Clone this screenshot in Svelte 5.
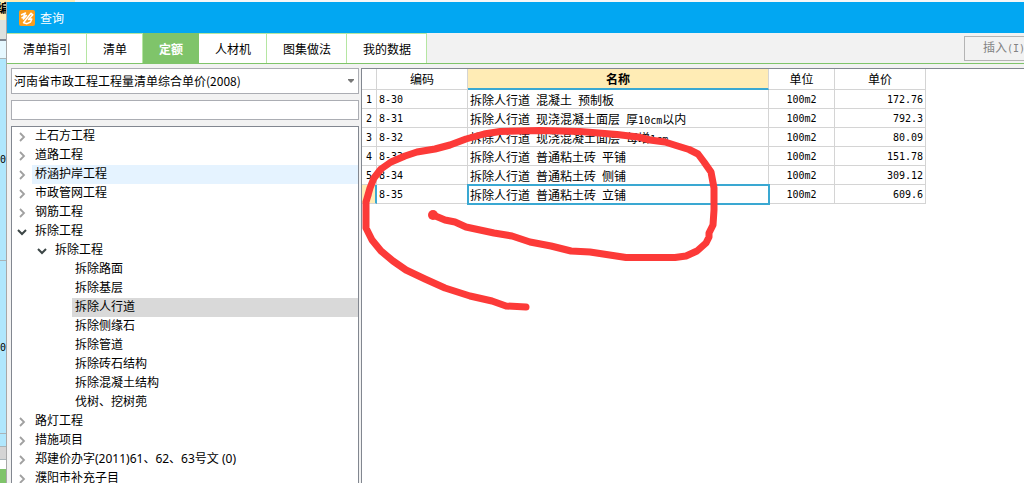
<script>
  const tabs = ['清单指引', '清单', '定额', '人材机', '图集做法', '我的数据'];
  let activeTab = $state('定额');
  let keyword = $state('');

  const tree = [
    { text: '土石方工程', level: 0, state: 'closed' },
    { text: '道路工程', level: 0, state: 'closed' },
    { text: '桥涵护岸工程', level: 0, state: 'closed', hot: true },
    { text: '市政管网工程', level: 0, state: 'closed' },
    { text: '钢筋工程', level: 0, state: 'closed' },
    { text: '拆除工程', level: 0, state: 'open' },
    { text: '拆除工程', level: 1, state: 'open' },
    { text: '拆除路面', level: 2 },
    { text: '拆除基层', level: 2 },
    { text: '拆除人行道', level: 2 },
    { text: '拆除侧缘石', level: 2 },
    { text: '拆除管道', level: 2 },
    { text: '拆除砖石结构', level: 2 },
    { text: '拆除混凝土结构', level: 2 },
    { text: '伐树、挖树蔸', level: 2 },
    { text: '路灯工程', level: 0, state: 'closed' },
    { text: '措施项目', level: 0, state: 'closed' },
    { text: '郑建价办字(2011)61、62、63号文 (0)', level: 0, state: 'closed' },
    { text: '濮阳市补充子目', level: 0, state: 'closed' }
  ];
  let selected = $state(9);

  const rows = [
    ['8-30', '拆除人行道 混凝土 预制板', '172.76'],
    ['8-31', '拆除人行道 现浇混凝土面层 厚10cm以内', '792.3'],
    ['8-32', '拆除人行道 现浇混凝土面层 每增1cm', '80.09'],
    ['8-33', '拆除人行道 普通粘土砖 平铺', '151.78'],
    ['8-34', '拆除人行道 普通粘土砖 侧铺', '309.12'],
    ['8-35', '拆除人行道 普通粘土砖 立铺', '609.6']
  ];
  let current = $state(5);

  // Splits a label into Chinese runs and half-width runs.
  const runs = (s) => s.split(/([\x20-\x7e]+)/).filter(Boolean);
  const isHalf = (s) => /^[\x20-\x7e]/.test(s);
</script>

<div class="screen">
  <div class="sheet" aria-hidden="true">
    <div class="s-head">编</div>
    <div class="s-grey"></div>
    <div class="s-pale"></div>
    <div class="s-blue tall"><span>0</span></div>
    <div class="s-blue mid"><span>0</span></div>
    <div class="s-blue short"></div>
    <div class="s-bar"></div>
    <div class="s-gap"></div>
    <div class="s-green"></div>
  </div>

  <div class="window">
    <header class="title">
      <svg width="16" height="16" viewBox="0 0 16 16" aria-hidden="true">
        <rect width="16" height="16" rx="2" fill="#fb9d1c" />
        <path d="M2 5 6.500 3 4.500 6.500M2.500 8 7.500 5.500 4 9.500" fill="none" stroke="#fff" stroke-width="1.500" stroke-linejoin="round" />
        <path d="M7 9.500 12 3.200 13.800 4.800 9.500 9.500 12.800 9 11.500 12 8 13.700 4.500 12.800 7 9.500" fill="none" stroke="#fff" stroke-width="1.500" stroke-linejoin="round" />
      </svg>
      <span>查询</span>
    </header>

    <div class="toolbar">
      <nav>
        {#each tabs as t}
          <button class="tab" class:active={t === activeTab} onclick={() => (activeTab = t)}>{t}</button>
        {/each}
      </nav>
      <button class="insert" disabled>插入<span class="half">(I)</span></button>
    </div>

    <div class="body">
      <aside>
        <div class="combo">
          <select aria-label="定额库">
            <option>河南省市政工程工程量清单综合单价(2008)</option>
          </select>
          <svg width="6" height="4" viewBox="0 0 6 4" aria-hidden="true"><path d="M0 0H6V1L3 4 0 1Z" fill="#777" /></svg>
        </div>
        <input class="search" type="text" aria-label="搜索" bind:value={keyword} />
        <ul class="tree">
          {#each tree as n, i}
            <li class="level{n.level}">
              <span class="arrow">
                {#if n.state === 'closed'}
                  <svg width="10" height="10" viewBox="0 0 10 10" aria-hidden="true"><path d="M3 1 7 5 3 9" fill="none" stroke="#a0a0a0" stroke-width="1.8" /></svg>
                {:else if n.state === 'open'}
                  <svg width="10" height="10" viewBox="0 0 10 10" aria-hidden="true"><path d="M1 3 5 7 9 3" fill="none" stroke="#3c4646" stroke-width="2" /></svg>
                {/if}
              </span>
              <button class="node" class:hot={n.hot} class:selected={i === selected} onclick={() => (selected = i)}>{n.text}</button>
            </li>
          {/each}
        </ul>
      </aside>

      <main>
        <table>
          <colgroup>
            <col class="c-num" /><col class="c-code" /><col class="c-name" /><col class="c-unit" /><col class="c-price" />
          </colgroup>
          <thead>
            <tr><th></th><th>编码</th><th class="sorted">名称</th><th>单位</th><th>单价</th></tr>
          </thead>
          <tbody>
            {#each rows as r, i}
              <tr class:current={i === current} onclick={() => (current = i)}>
                <td class="num half">{i + 1}</td>
                <td class="half">{r[0]}</td>
                <td class="name">{#each runs(r[1]) as part}<span class:half={isHalf(part)}>{part}</span>{/each}</td>
                <td class="unit half">100m2</td>
                <td class="price half">{r[2]}</td>
              </tr>
            {/each}
          </tbody>
        </table>
      </main>
    </div>
  </div>

  <svg class="ink" width="1024" height="483" viewBox="0 0 1024 483" aria-hidden="true">
    <circle cx="433" cy="215" r="5" />
    <path d="M433 215 445 220 455 222 466 227 494 233 512 236 530 242 551 246 571 251 590 252 626 257.500H675L686 256 697 251 706 243 709 237V233L713 225 714 210V188L711 172 704 162 698 154 689 149.500 676 145.500 665 142 650 140 638 137 617 134.500 580 131.500 540 130.500 500 131.500 484 134 466 139 450 145 435 149 417 152 405 156 391 162 381 169 374 178 370 188 366 202V228L372 240 381 251 393 261 406 270 425 279 445 288 470 296 492 301 506 306 526 307" />
  </svg>
</div>

<style>
  :global(body) {
    margin: 0;
  }
  .screen {
    position: relative;
    display: flex;
    height: 100vh;
    overflow: hidden;
    background: linear-gradient(90deg, #ffecb5 75px, #f7f7f7 75px);
    color: #000;
    font: 12px/18px 'Noto Sans CJK SC', sans-serif;
  }
  button,
  input,
  select {
    box-sizing: border-box;
    margin: 0;
    font: inherit;
    color: inherit;
    border-radius: 0;
  }
  .half {
    font-family: 'DejaVu Sans Mono', 'Noto Sans CJK SC', monospace;
    font-size: 10px;
    white-space: pre;
  }

  /* Edge of the worksheet behind the dialog */
  .sheet {
    flex: none;
    width: 6px;
    display: flex;
    flex-direction: column;
    overflow: hidden;
  }
  .sheet div {
    flex: none;
    box-sizing: border-box;
    display: flex;
    align-items: center;
    justify-content: flex-end;
    overflow: hidden;
    border-bottom: 1px solid #a9b4b8;
  }
  .sheet .s-head {
    height: 20px;
    padding-bottom: 4px;
    justify-content: center;
    font-weight: bold;
    border: 0;
    background: #ffecb5;
  }
  .sheet .s-grey {
    height: 21px;
    background: #dde2df;
    border-bottom: 2px solid #7e8791;
  }
  .sheet .s-pale {
    height: 18px;
    background: #e6f8ff;
  }
  .s-blue {
    background: #b0e7fd;
    font: 10px 'DejaVu Sans Mono', monospace;
  }
  .tall {
    height: 202px;
  }
  .mid {
    height: 173px;
  }
  .short {
    height: 13px;
  }
  .sheet .s-bar {
    height: 13px;
    background: #d4d4d4;
  }
  .sheet .s-gap {
    height: 9px;
    background: #fff;
    border: 0;
  }
  .sheet .s-green {
    flex: 1;
    background: #7fc46a;
    border: 0;
  }

  .window {
    flex: 1;
    min-width: 0;
    display: flex;
    flex-direction: column;
    margin-top: 2px;
    border-left: 1px solid #a8a8a8;
    background: #f2f2f2;
  }
  .title {
    flex: none;
    display: flex;
    align-items: center;
    gap: 5px;
    height: 31px;
    padding-left: 12px;
    background: #02a7f2;
    color: #fff;
  }
  .toolbar {
    flex: none;
    display: flex;
    justify-content: space-between;
    height: 30px;
    border-bottom: 1px solid #7fc46a;
  }
  nav {
    display: flex;
  }
  .tab {
    padding: 0 15px 0 16px;
    border: 0;
    border-top: 1px solid #b5e6a2;
    border-right: 1px solid #b5e6a2;
    background: #fff;
  }
  .tab.active {
    background: #7fc46a;
    border-color: #7fc46a;
    color: #fff;
    font-weight: bold;
  }
  .insert {
    align-self: center;
    height: 25px;
    width: 80px;
    margin-right: -20px;
    padding: 0;
    border: 1px solid #b4b4b4;
    background: #f2f2f2;
    color: #838383;
  }

  .body {
    flex: 1;
    min-height: 0;
    display: flex;
    gap: 2px;
    padding: 4px 0 0 4px;
  }
  aside {
    flex: none;
    width: 348px;
    display: flex;
    flex-direction: column;
  }
  .combo {
    flex: none;
    display: grid;
    align-items: center;
    height: 26px;
    margin-bottom: 6px;
  }
  .combo select,
  .combo svg {
    grid-area: 1 / 1;
  }
  .combo select {
    width: 100%;
    height: 26px;
    padding: 0 20px 0 2px;
    appearance: none;
    border: 1px solid #abadb3;
    background: #fff;
  }
  .combo svg {
    justify-self: end;
    margin-right: 5px;
    pointer-events: none;
  }
  .search {
    flex: none;
    width: 100%;
    height: 20px;
    margin-bottom: 6px;
    padding: 0 3px;
    border: 1px solid #abadb3;
    background: #fff;
  }
  .tree {
    flex: 1;
    min-height: 0;
    overflow: hidden;
    margin: 0;
    padding: 0;
    list-style: none;
    border: 1px solid #828790;
    border-bottom: 0;
    background: #fff;
    font-family: 'Noto Sans', 'Noto Sans CJK SC', sans-serif;
  }
  .tree li {
    display: flex;
    height: 19px;
  }
  .level1 {
    padding-left: 20px;
  }
  .level2 {
    padding-left: 40px;
  }
  .arrow {
    flex: none;
    width: 20px;
    display: flex;
    align-items: center;
    justify-content: center;
  }
  .node {
    flex: 1;
    padding: 0 3px 2px;
    border: 0;
    background: none;
    text-align: left;
    line-height: 17px;
    white-space: nowrap;
  }
  .node:hover,
  .node.hot {
    background: #e5f3ff;
  }
  .node.selected {
    background: #d9d9d9;
  }

  main {
    flex: 1;
    min-width: 0;
    border-top: 1px solid #828790;
    border-left: 1px solid #828790;
    background: #fff;
  }
  table {
    table-layout: fixed;
    width: 564px;
    border-spacing: 0;
  }
  .c-num {
    width: 15px;
  }
  .c-code {
    width: 91px;
  }
  .c-name {
    width: 301px;
  }
  .c-unit {
    width: 66px;
  }
  .c-price {
    width: 91px;
  }
  th,
  td {
    box-sizing: border-box;
    padding: 0 2px;
    border-right: 1px solid #d4d4d4;
    border-bottom: 1px solid #d4d4d4;
    line-height: 18px;
    white-space: nowrap;
  }
  th {
    height: 21px;
    font-weight: normal;
  }
  th.sorted {
    background: #ffecb5;
    border-bottom: 2px solid #3aa8d2;
    font-weight: bold;
  }
  td {
    height: 19px;
    padding-top: 2px;
    line-height: 16px;
  }
  td span {
    line-height: 12px;
  }
  .num,
  .unit {
    text-align: center;
  }
  .price {
    text-align: right;
  }
  .current .num {
    background: #ffecb5;
    border-right: 2px solid #3aa8d2;
  }
  .current .name {
    outline: 2px solid #3aa8d2;
    outline-offset: -1px;
  }

  /* Freehand mark drawn over the dialog */
  .ink {
    position: absolute;
    top: 0;
    left: 0;
    pointer-events: none;
  }
  .ink circle {
    fill: #fc3a38;
  }
  .ink path {
    fill: none;
    stroke: #fc3a38;
    stroke-width: 7;
    stroke-linecap: round;
    stroke-linejoin: round;
  }
</style>
